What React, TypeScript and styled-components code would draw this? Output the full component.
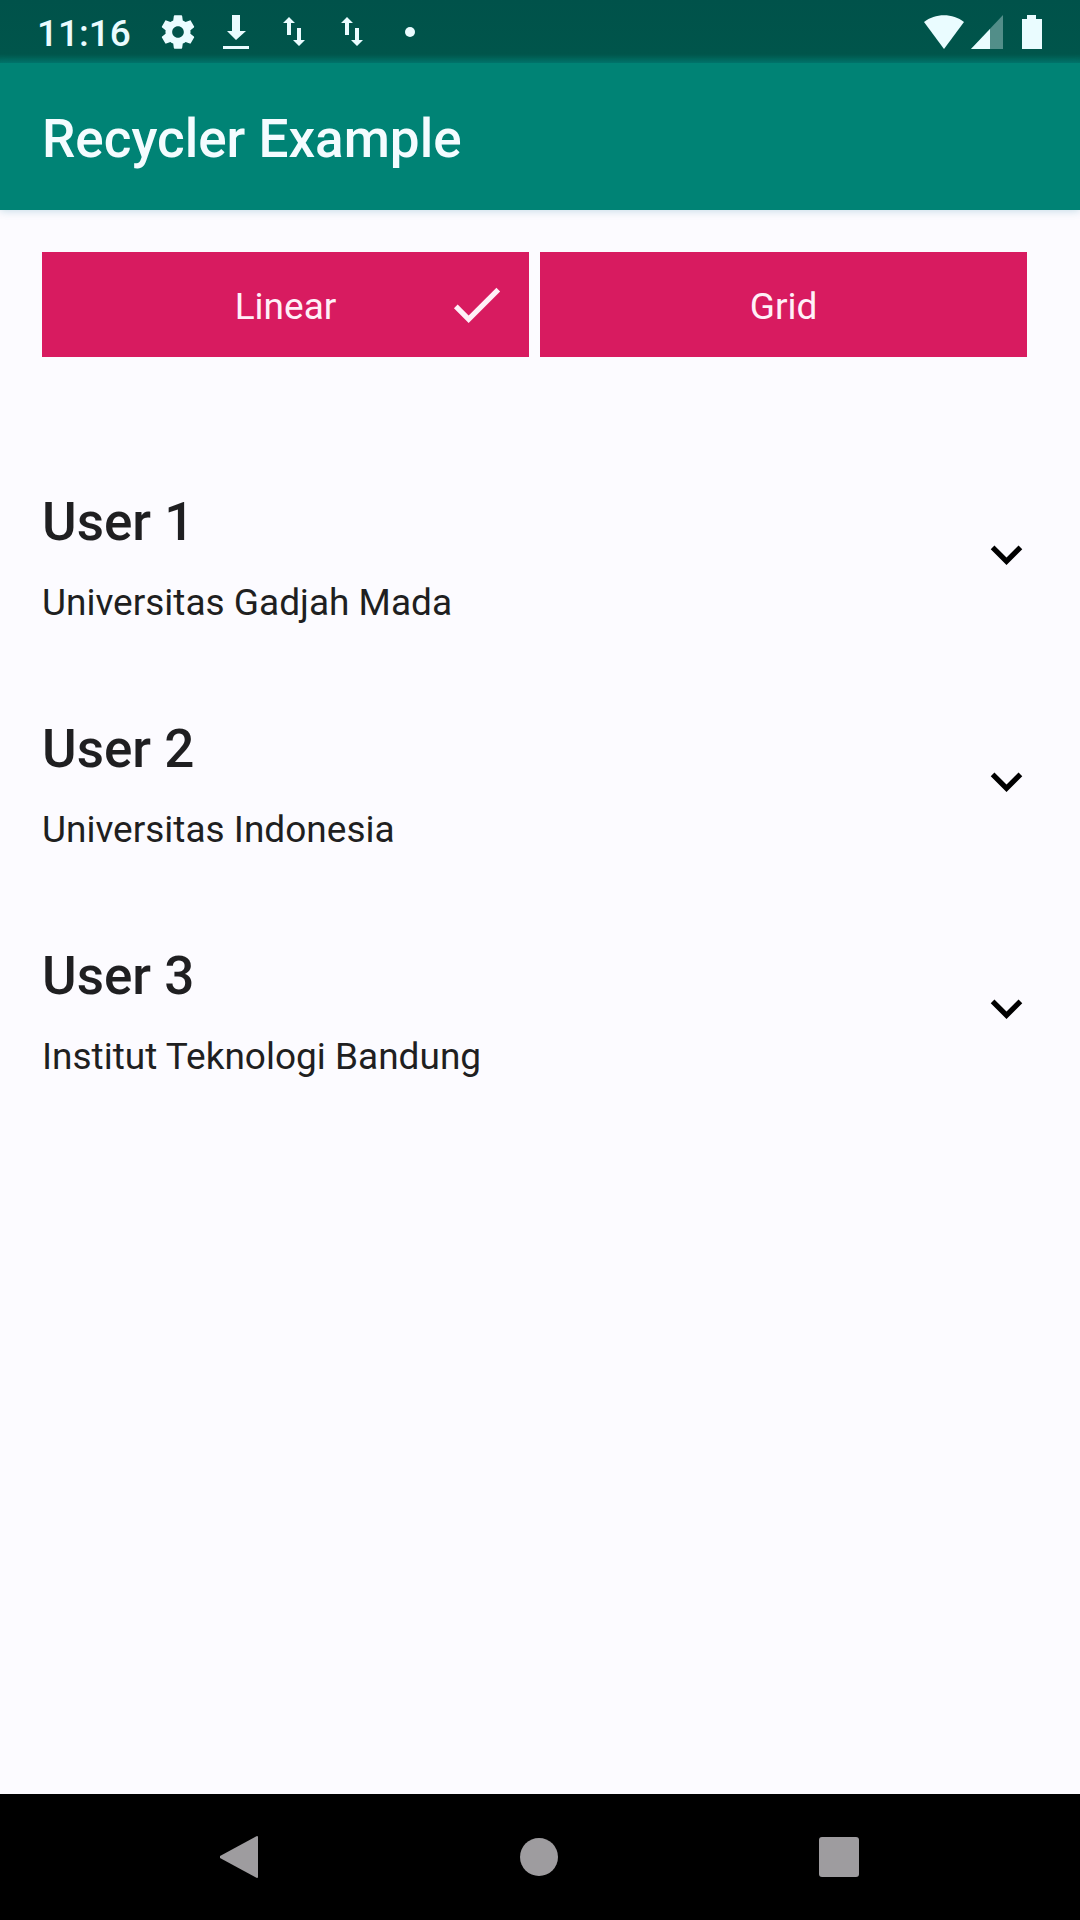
import React, { useState } from "react";
import styled, { createGlobalStyle } from "styled-components";

const GlobalStyle = createGlobalStyle`
  *, *::before, *::after { box-sizing: border-box; }
  body {
    margin: 0;
    background: #fcfbff;
    color: #1f1f21;
    font-family: Roboto, "Noto Sans", sans-serif;
  }
  button { font: inherit; color: inherit; border: 0; padding: 0; cursor: pointer; }
`;

const Screen = styled.div`
  min-height: 100vh;
  display: flex;
  flex-direction: column;
`;

const StatusBar = styled.div`
  height: 63px;
  padding: 0 38px 0 37px;
  display: flex;
  align-items: center;
  justify-content: space-between;
  background: linear-gradient(#00524a, #00554b 54px, #007468);
  color: #eafcff;
`;

const StatusGroup = styled.div`
  display: flex;
  align-items: center;
`;

const Clock = styled.time`
  width: 112px;
  padding-top: 4px;
  font-size: 37px;
  line-height: 44px;
  font-weight: 500;
`;

const Slot = styled.span`
  width: 58px;
  display: flex;
  justify-content: center;
`;

const SystemIcons = styled.div`
  display: flex;
  align-items: center;
  gap: 7px;
`;

const Glyph = styled.svg`
  display: block;
  fill: currentColor;
`;

const AppBar = styled.header`
  height: 147px;
  padding: 4px 42px 0;
  display: flex;
  align-items: center;
  background: #008375;
  color: #f4fcff;
  box-shadow: 0 1px 8px rgba(0, 110, 140, 0.22);
`;

const AppTitle = styled.h1`
  margin: 0;
  font-size: 53px;
  line-height: 62px;
  font-weight: 500;
`;

const Main = styled.main`
  flex: 1;
`;

const Switcher = styled.div`
  padding: 42px 53px 84px 42px;
  display: grid;
  grid-template-columns: 1fr 1fr;
  gap: 11px;
`;

const ModeButton = styled.button`
  height: 105px;
  padding: 0 21px;
  display: grid;
  grid-template-columns: 63px 1fr 63px;
  align-items: center;
  background: #d81b60;
  color: #fff0f8;
`;

const ModeLabel = styled.span`
  grid-column: 2;
  padding-top: 4px;
  font-size: 37px;
  line-height: 44px;
  text-align: center;
`;

const UserList = styled.ul`
  margin: 0;
  padding: 0;
  list-style: none;
`;

const UserRow = styled.li`
  height: 227px;
  padding: 0 42px;
  display: flex;
  align-items: center;
  justify-content: space-between;
`;

const UserText = styled.div`
  padding-top: 6px;
  display: grid;
  gap: 28px;
`;

const UserName = styled.h2`
  margin: 0;
  font-size: 53px;
  line-height: 62px;
  font-weight: 500;
`;

const University = styled.p`
  margin: 0;
  font-size: 37px;
  line-height: 44px;
`;

const ExpandButton = styled.button`
  background: none;
  color: #000;
`;

const NavBar = styled.nav`
  height: 126px;
  padding: 0 91px 0 89px;
  display: grid;
  grid-template-columns: repeat(3, 1fr);
  background: #000;
  color: #9e9c9f;
`;

const NavButton = styled.button`
  display: flex;
  align-items: center;
  justify-content: center;
  background: none;
`;

const SyncArrows = () => (
  <Glyph width="22" height="30" viewBox="0 0 22 30" aria-hidden="true">
    <path d="M6 0l6 6H8v12H4V6H0z M16 29l-6-6h4V11h4v12h4z" />
  </Glyph>
);

const users = [
  { name: "User 1", university: "Universitas Gadjah Mada" },
  { name: "User 2", university: "Universitas Indonesia" },
  { name: "User 3", university: "Institut Teknologi Bandung" },
];

const modes = ["Linear", "Grid"];

export default function App() {
  const [mode, setMode] = useState("Linear");

  return (
    <Screen>
      <GlobalStyle />
      <StatusBar>
        <StatusGroup>
          <Clock>11:16</Clock>
          <Slot>
            <Glyph width="40" height="40" viewBox="0 0 24 24" aria-hidden="true">
              <path d="M19.43 12.98c.04-.32.07-.64.07-.98s-.03-.66-.07-.98l2.11-1.65c.19-.15.24-.42.12-.64l-2-3.46c-.12-.22-.39-.3-.61-.22l-2.49 1c-.52-.4-1.08-.73-1.69-.98l-.38-2.65C14.46 2.18 14.25 2 14 2h-4c-.25 0-.46.18-.49.42l-.38 2.65c-.61.25-1.17.59-1.69.98l-2.49-1c-.23-.09-.49 0-.61.22l-2 3.46c-.13.22-.07.49.12.64l2.11 1.65c-.04.32-.07.65-.07.98s.03.66.07.98l-2.11 1.65c-.19.15-.24.42-.12.64l2 3.46c.12.22.39.3.61.22l2.49-1c.52.4 1.08.73 1.69.98l.38 2.65c.03.24.24.42.49.42h4c.25 0 .46-.18.49-.42l.38-2.65c.61-.25 1.17-.59 1.69-.98l2.49 1c.23.09.49 0 .61-.22l2-3.46c.12-.22.07-.49-.12-.64l-2.11-1.65zM12 15.5c-1.93 0-3.5-1.57-3.5-3.5s1.57-3.5 3.5-3.5 3.5 1.57 3.5 3.5-1.57 3.5-3.5 3.5z" />
            </Glyph>
          </Slot>
          <Slot>
            <Glyph width="26" height="34" viewBox="0 0 26 34" aria-hidden="true">
              <path d="M9 0h8v16h6L13 25 4 16h5z M0 31h26v3H0z" />
            </Glyph>
          </Slot>
          <Slot><SyncArrows /></Slot>
          <Slot><SyncArrows /></Slot>
          <Slot>
            <Glyph width="10" height="10" viewBox="0 0 10 10" aria-hidden="true">
              <circle cx="5" cy="5" r="5" />
            </Glyph>
          </Slot>
        </StatusGroup>
        <SystemIcons>
          <Glyph width="40" height="34" viewBox="0 0 40 34" aria-hidden="true">
            <path d="M20 34L0 7C11-2 29-2 40 7z" />
          </Glyph>
          <Glyph width="32" height="34" viewBox="0 0 32 34" aria-hidden="true">
            <path d="M32 0v34H0z" opacity="0.35" />
            <path d="M19 14v20H0z" />
          </Glyph>
          <Glyph width="32" height="34" viewBox="0 0 32 34" aria-hidden="true">
            <path d="M17 0h9v4h6v30H12V4h5z" />
          </Glyph>
        </SystemIcons>
      </StatusBar>
      <AppBar>
        <AppTitle>Recycler Example</AppTitle>
      </AppBar>
      <Main>
        <Switcher>
          {modes.map((name) => (
            <ModeButton
              key={name}
              type="button"
              aria-pressed={mode === name}
              onClick={() => setMode(name)}
            >
              <ModeLabel>{name}</ModeLabel>
              {mode === name && (
                <Glyph width="63" height="63" viewBox="0 0 24 24" aria-hidden="true">
                  <path d="M9 16.17L4.83 12l-1.42 1.41L9 19 21 7l-1.41-1.41z" />
                </Glyph>
              )}
            </ModeButton>
          ))}
        </Switcher>
        <UserList>
          {users.map((user) => (
            <UserRow key={user.name}>
              <UserText>
                <UserName>{user.name}</UserName>
                <University>{user.university}</University>
              </UserText>
              <ExpandButton type="button" aria-label={`Expand ${user.name}`}>
                <Glyph width="63" height="63" viewBox="0 0 24 24" aria-hidden="true">
                  <path d="M16.59 8.59L12 13.17 7.41 8.59 6 10l6 6 6-6z" />
                </Glyph>
              </ExpandButton>
            </UserRow>
          ))}
        </UserList>
      </Main>
      <NavBar>
        <NavButton type="button" aria-label="Back">
          <Glyph width="38" height="42" viewBox="0 0 38 42" aria-hidden="true">
            <path d="M38 1v40q0 1-1 1L0 22v-2L37 0q1 0 1 1z" />
          </Glyph>
        </NavButton>
        <NavButton type="button" aria-label="Home">
          <Glyph width="38" height="38" viewBox="0 0 38 38" aria-hidden="true">
            <circle cx="19" cy="19" r="19" />
          </Glyph>
        </NavButton>
        <NavButton type="button" aria-label="Recent apps">
          <Glyph width="40" height="40" viewBox="0 0 40 40" aria-hidden="true">
            <rect width="40" height="40" rx="3" />
          </Glyph>
        </NavButton>
      </NavBar>
    </Screen>
  );
}
